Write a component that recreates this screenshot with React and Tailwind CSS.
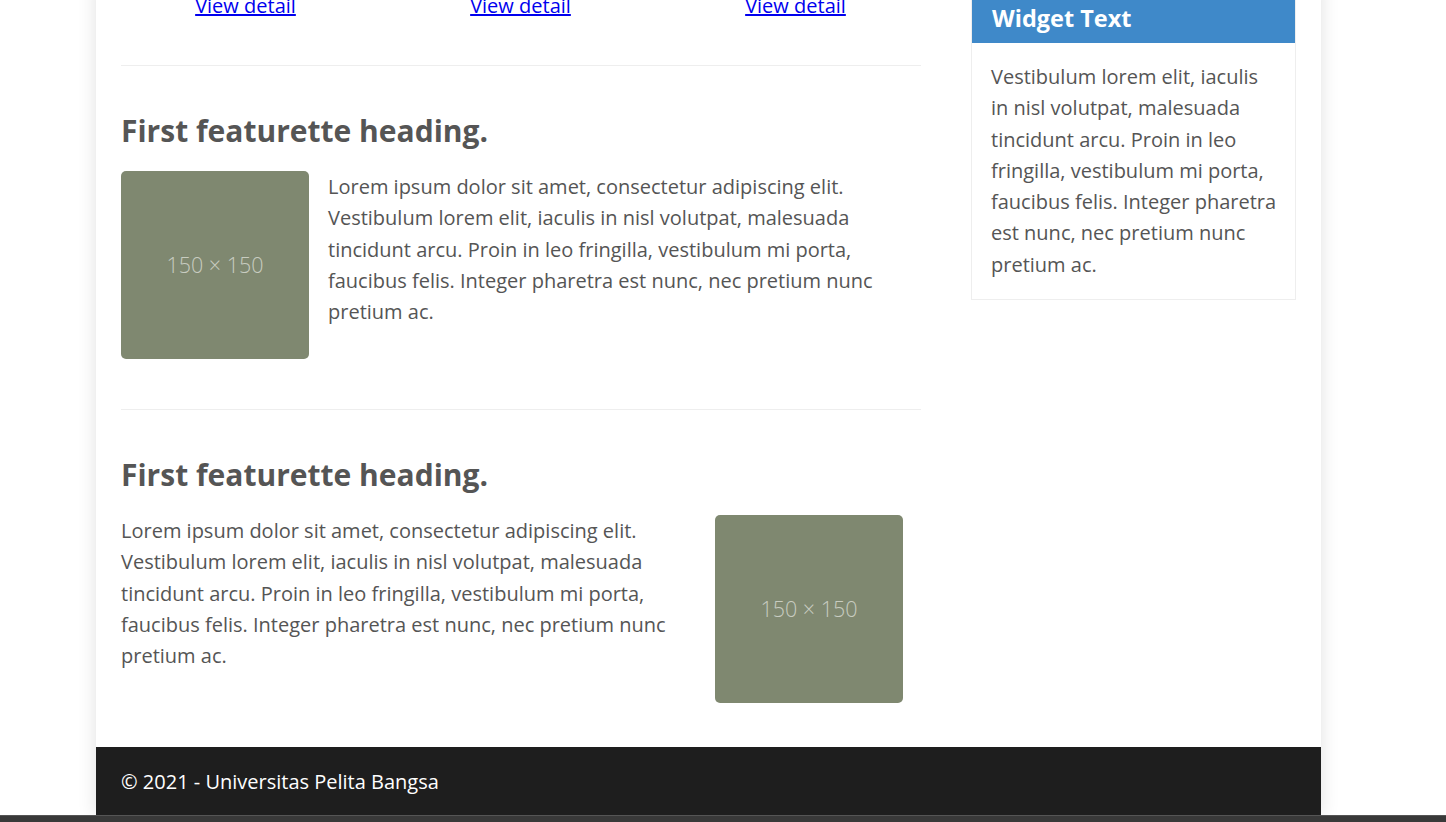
export default function App() {
    const lorem = 'Lorem ipsum dolor sit amet, consectetur adipiscing elit. Vestibulum lorem elit, iaculis in nisl volutpat, malesuada tincidunt arcu. Proin in leo fringilla, vestibulum mi porta, faucibus felis. Integer pharetra est nunc, nec pretium nunc pretium ac.';

    const Placeholder = () => (
        <div className="w-[188px] h-[188px] shrink-0 rounded-[5px] bg-[#7f8870] flex items-center justify-center text-[21.5px] font-light text-[#c8ccc0]">
            150 × 150
        </div>
    );

    return (
        <div className="h-[822px] overflow-hidden bg-white flex flex-col font-['Open_Sans',sans-serif] text-[#555]">
            <div className="flex-1 overflow-hidden">
                {/* Page container (scrolled) */}
                <div className="ml-[96px] w-[1225px] bg-white shadow-[0_0_18px_rgba(0,0,0,0.12)] -mt-[20px]">
                    <div className="flex">
                        {/* Main column */}
                        <main className="ml-[25px] w-[800px]">
                            <div className="grid grid-cols-3 w-[825px] -ml-[13px] pt-[12px] pb-[46px] text-[20px]">
                                {[0, 1, 2].map((i) => (
                                    <div key={i} className="text-center leading-[27px]">
                                        <a href="#" className="text-[#0000ee] underline">View detail</a>
                                    </div>
                                ))}
                            </div>
                            <hr className="border-t border-[#eee]" />

                            {/* Featurette 1 */}
                            <section className="pt-[45px] pb-[50px]">
                                <h2 className="text-[30px] font-bold leading-[40px] mb-[20px]">First featurette heading.</h2>
                                <div className="flex gap-[19px]">
                                    <Placeholder />
                                    <p className="flex-1 text-[20px] leading-[31.25px]">{lorem}</p>
                                </div>
                            </section>
                            <hr className="border-t border-[#eee]" />

                            {/* Featurette 2 */}
                            <section className="pt-[45px] pb-[44px]">
                                <h2 className="text-[30px] font-bold leading-[40px] mb-[20px]">First featurette heading.</h2>
                                <div className="flex justify-between pr-[18px]">
                                    <p className="text-[20px] leading-[31.25px] w-[575px]">{lorem}</p>
                                    <Placeholder />
                                </div>
                            </section>
                        </main>

                        {/* Sidebar */}
                        <aside className="ml-[50px] w-[325px]">
                            <div className="border border-[#eee]">
                                <div className="bg-[#3f89c9] text-white font-bold text-[23.5px] px-[20px] pt-[21px] pb-[9px] leading-[32px]">Widget Text</div>
                                <p className="pl-[19px] pr-[17px] pt-[18px] pb-[19px] text-[20px] leading-[31.25px]">
                                    Vestibulum lorem elit, iaculis in nisl volutpat, malesuada tincidunt arcu. Proin in leo fringilla, vestibulum mi porta, faucibus felis. Integer pharetra est nunc, nec pretium nunc pretium ac.
                                </p>
                            </div>
                        </aside>
                    </div>

                    {/* Footer */}
                    <footer className="bg-[#1e1e1e] h-[69px] px-[25px] flex items-center text-white text-[20px]">
                        © 2021 - Universitas Pelita Bangsa
                    </footer>
                </div>
            </div>
            <div className="h-[7px] bg-[#393939] border-t border-[#555]" />
        </div>
    );
}
